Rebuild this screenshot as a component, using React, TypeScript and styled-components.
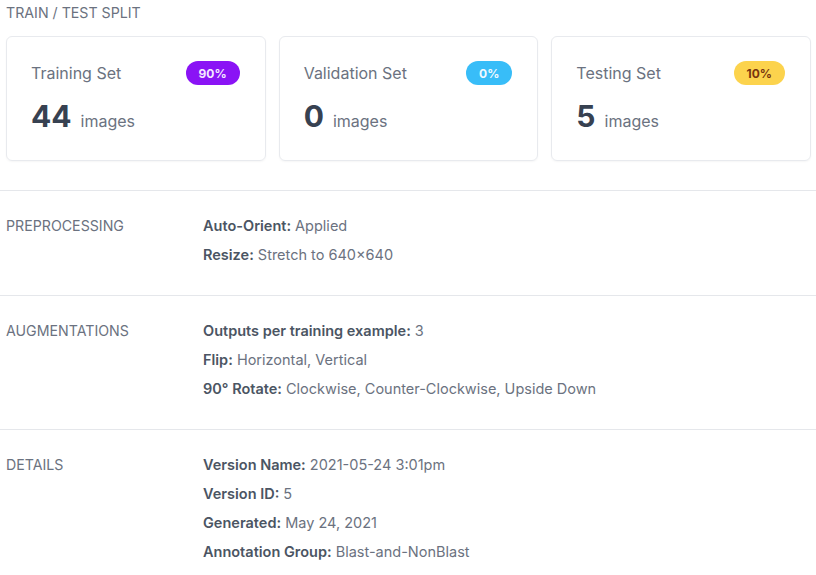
import React from "react";
import styled, { createGlobalStyle } from "styled-components";

const Global = createGlobalStyle`
  html, body { margin: 0; padding: 0; background: #ffffff; }
  body { font-family: Inter, "Noto Sans", sans-serif; color: #6b7280; -webkit-font-smoothing: antialiased; }
`;

const Page = styled.div`
  width: 816px;
  padding-top: 3px;
`;

const Heading = styled.div`
  padding: 0 5px 0 6px;
  font-size: 14.2px;
  line-height: 20px;
  text-transform: uppercase;
  color: #6b7280;
  margin-bottom: 13px;
`;

const Cards = styled.div`
  display: grid;
  grid-template-columns: repeat(3, 1fr);
  gap: 13px;
  padding: 0 5px 0 6px;
  margin-bottom: 29px;
`;

const Card = styled.div`
  border: 1px solid #e8eaee;
  border-radius: 6px;
  box-shadow: 0 1px 2px rgba(0, 0, 0, 0.04);
  padding: 24px 25px 21px 24px;
  display: flex;
  flex-direction: column;
  gap: 13px;
`;

const CardTop = styled.div`
  display: flex;
  align-items: center;
  justify-content: space-between;
  height: 24px;
`;

const CardTitle = styled.span`
  font-size: 16px;
  color: #6b7280;
`;

const Badge = styled.span<{ $bg: string; $fg: string }>`
  display: inline-flex;
  align-items: center;
  justify-content: center;
  height: 24px;
  padding: 0 13px;
  border-radius: 12px;
  background: ${(p) => p.$bg};
  color: ${(p) => p.$fg};
  font-size: 12px;
  font-weight: 700;
`;

const CountRow = styled.div`
  display: flex;
  align-items: baseline;
  gap: 9px;
  line-height: 36px;
`;

const Count = styled.span`
  font-size: 30px;
  font-weight: 700;
  color: #374151;
`;

const Unit = styled.span`
  font-size: 16px;
  color: #6b7280;
`;

const Section = styled.div`
  border-top: 1px solid #e5e7eb;
  display: grid;
  grid-template-columns: 197px 1fr;
  padding: 23px 5px 23px 6px;
`;

const SectionLabel = styled.div`
  font-size: 14.2px;
  line-height: 24px;
  text-transform: uppercase;
  color: #6b7280;
`;

const Values = styled.div`
  display: flex;
  flex-direction: column;
`;

const Line = styled.div`
  font-size: 14.5px;
  line-height: 24px;
  margin-bottom: 5px;
  color: #6b7280;
`;

const Key = styled.span`
  font-weight: 600;
  color: #4b5563;
`;

const cards = [
  { title: "Training Set", pct: "90%", count: 44, bg: "#8a13f5", fg: "#f3e8ff" },
  { title: "Validation Set", pct: "0%", count: 0, bg: "#38bdf8", fg: "#f0f9ff" },
  { title: "Testing Set", pct: "10%", count: 5, bg: "#fcd34d", fg: "#78350f" },
];

const sections: { label: string; lines: [string, string][] }[] = [
  {
    label: "Preprocessing",
    lines: [
      ["Auto-Orient:", "Applied"],
      ["Resize:", "Stretch to 640×640"],
    ],
  },
  {
    label: "Augmentations",
    lines: [
      ["Outputs per training example:", "3"],
      ["Flip:", "Horizontal, Vertical"],
      ["90° Rotate:", "Clockwise, Counter-Clockwise, Upside Down"],
    ],
  },
  {
    label: "Details",
    lines: [
      ["Version Name:", "2021-05-24 3:01pm"],
      ["Version ID:", "5"],
      ["Generated:", "May 24, 2021"],
      ["Annotation Group:", "Blast-and-NonBlast"],
    ],
  },
];

export default function App() {
  return (
    <Page>
      <Global />
      <Heading>Train / Test Split</Heading>
      <Cards>
        {cards.map((c) => (
          <Card key={c.title}>
            <CardTop>
              <CardTitle>{c.title}</CardTitle>
              <Badge $bg={c.bg} $fg={c.fg}>{c.pct}</Badge>
            </CardTop>
            <CountRow>
              <Count>{c.count}</Count>
              <Unit>images</Unit>
            </CountRow>
          </Card>
        ))}
      </Cards>
      {sections.map((s) => (
        <Section key={s.label}>
          <SectionLabel>{s.label}</SectionLabel>
          <Values>
            {s.lines.map(([k, v]) => (
              <Line key={k}>
                <Key>{k}</Key> {v}
              </Line>
            ))}
          </Values>
        </Section>
      ))}
    </Page>
  );
}
